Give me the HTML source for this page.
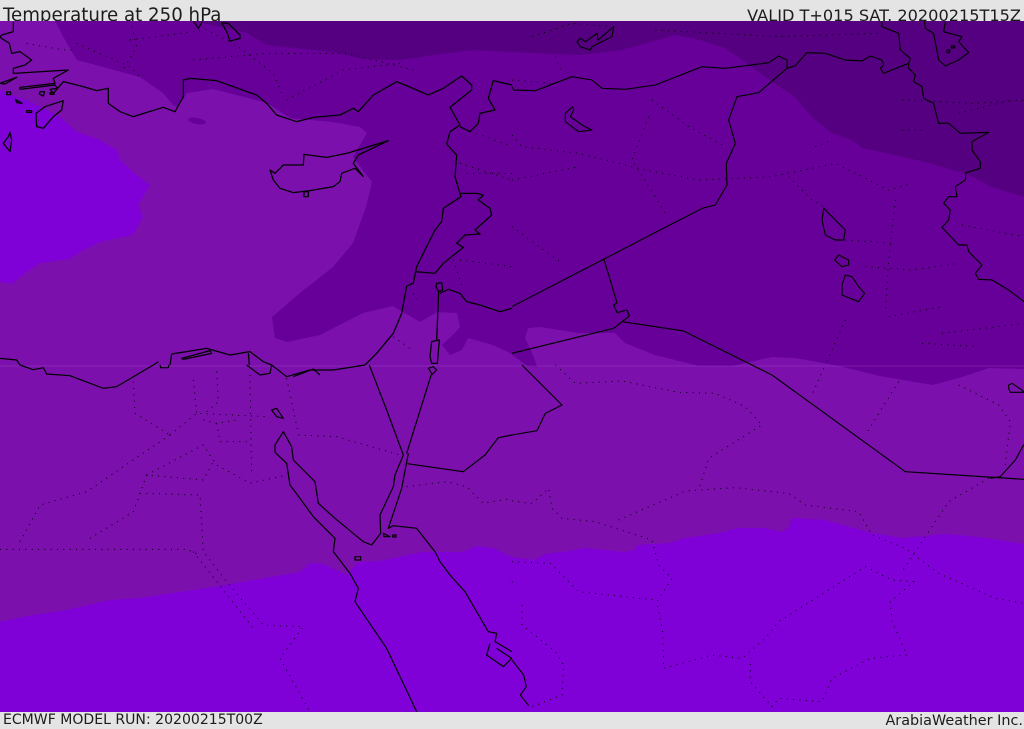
<!DOCTYPE html>
<html><head><meta charset="utf-8"><style>
html,body{margin:0;padding:0;background:#e4e4e4}
body{width:1024px;height:729px;overflow:hidden;position:relative;font-family:"DejaVu Sans","Liberation Sans",sans-serif;color:#1c1c1c}
.t{position:absolute;white-space:nowrap;line-height:1}
svg{position:absolute;left:0;top:21px}
</style></head><body>
<div class="t" style="left:3px;top:7px;font-size:18.2px">Temperature at 250 hPa</div>
<div class="t" style="right:3px;top:8px;font-size:16.15px">VALID T+015 SAT. 20200215T15Z</div>
<div class="t" style="left:3px;top:713px;font-size:14.05px">ECMWF MODEL RUN: 20200215T00Z</div>
<div class="t" style="right:1px;top:714px;font-size:14.4px">ArabiaWeather Inc.</div>
<svg width="1024" height="691" viewBox="0 21 1024 691">
<rect x="0" y="21" width="1024" height="691" fill="#7b10ac"/>
<path fill="#8000d8" d="M0 90L33 103 60 117 77 132 100 140 117 150 120 160 133 172 150 185 138 205 143 217 133 235 100 242 80 252 70 259 40 263 23 275 12 284 0 282Z"/>
<path fill="#8000d8" d="M0 622L27 616 67 610 110 600 140 598 213 587 300 572 310 563 323 564 347 575 358 562 380 561 423 552 463 552 477 546 493 548 512 557 534 560 545 554 562 552 585 548 625 552 634 550 637 545 669 543 685 538 719 533 739 528 765 528 782 532 789 527 792 518 825 520 872 533 902 538 945 534 979 537 1024 544V712H0Z"/>
<path fill="#660099" d="M55 21L65 40 77 60 103 67 140 77 163 93 173 105 178 107 187 93 213 89 267 103 290 118 333 122 360 127 367 133 353 157 372 182 366 207 353 243 333 267 300 293 272 317 275 338 287 342 320 335 363 313 393 306 420 322 437 312 457 313 460 327 455 333 442 345 450 355 462 350 468 338 493 345 510 353 527 366 537 367 533 355 525 338 528 328 540 327 579 333 615 333 625 343 655 355 699 366 732 366 772 357 795 358 839 366 880 376 932 385 959 378 989 368 1024 369V21Z"/>
<path fill="#550080" d="M193 21L247 33 267 45 333 52 363 59 400 60 433 55 473 50 512 52 579 55 622 50 675 35 692 38 725 48 745 62 769 80 795 97 812 117 832 133 852 140 862 148 895 155 929 163 969 175 992 187 1024 197V21Z"/>
<ellipse cx="197" cy="121" rx="9" ry="3" fill="#660099" transform="rotate(10 197 121)"/>
<rect x="0" y="365.5" width="1024" height="1" fill="#fff" opacity=".1"/>

<g fill="none" stroke="#000">
<g transform="scale(.33333)" stroke-width="3.8" stroke-linejoin="round">
<path d="M40 65L40 95 5 105 0 112 28 130 35 160 60 155 95 180 75 195 40 205 40 220 205 210 160 235 165 250 60 262 60 268 165 255 172 265 150 268 160 280 190 245 250 260 290 272 325 265 325 310 360 335 400 350 490 322 525 335 550 290 550 240 570 235 650 242 770 285 800 310 830 345 890 365 940 352 1020 345 1060 325 1075 335 1120 285 1190 245 1215 255 1285 285 1330 265 1385 228 1415 255 1415 270 1350 322 1380 375 1350 395 1340 432 1370 465 1365 530 1383 590 1330 625 1325 665 1305 690 1250 800 1240 850 1220 858 1205 940 1180 1000 1130 1060 1095 1095"/>
<path d="M0 250L50 232 15 252ZM190 302L185 330 160 350 130 385 110 380 108 340 135 320ZM30 397L35 420 30 455 10 430 25 410ZM20 276H32V284H20ZM46 298L66 310 50 308ZM80 332H95V337H80ZM120 275L134 275 130 288 118 282ZM150 278H162V283H150Z"/>
<path d="M912 463L910 495 850 495 825 520 810 510 820 540 840 565 880 578 930 572 1000 560 1020 545 1025 520 1065 505 1090 530 1060 490 1075 465 1165 422 1040 460 980 472 912 463ZM912 575L925 575 925 590 912 590Z"/>
<path d="M1310 850L1325 848 1328 870 1316 875 1308 860ZM1316 875L1310 1020M1290 1070L1295 1025 1318 1020 1312 1090 1295 1090ZM1320 880L1345 868 1380 880 1400 905 1440 915 1500 935 1536 925M1380 580H1430L1450 585 1435 600 1470 625 1475 645 1425 690 1440 702 1395 705 1370 730 1390 742 1330 790 1305 820 1245 815"/>
<path d="M1480 242L1536 255M1480 242L1465 295 1485 330 1440 340 1435 370 1410 395 1380 380"/>
<path d="M580 63L595 85 607 65M665 68L685 70 720 105 720 115 690 123 680 95 665 68"/>
<path d="M0 1075L50 1080 60 1095M460 1095L475 1085M510 1095L515 1062 620 1045 690 1065 750 1055 790 1085 815 1095M545 1075L630 1052 635 1060 550 1078ZM745 1060L748 1095"/>
</g>
<g transform="translate(512 0) scale(.33333)" stroke-width="3.4" stroke-linejoin="round">
<path d="M0 920L570 625 610 615 645 555 643 490 670 430 650 360 675 290 740 278 825 205"/>
<path d="M275 775L315 908 305 915 315 938 345 930 352 948 305 985 0 1060M330 965L515 993 720 1095"/>
<path d="M0 260L5 270 70 272 180 230 240 240 270 265 340 268 430 255 570 200 640 205 770 188 800 168 825 180 825 205 850 197 885 158 940 160 1000 180 1050 183 1075 168 1110 180 1115 195 1105 205 1115 220 1190 190 1190 205 1210 225 1205 245 1230 260 1235 295 1265 310 1280 370 1310 370 1345 400 1430 397 1380 425 1380 450 1405 485 1405 505 1362 518 1360 540 1330 560 1335 590 1310 590 1295 610 1315 630 1310 660 1290 682 1340 735 1365 735 1370 755 1410 795 1390 820 1400 838 1440 840 1490 870 1536 905"/>
<path d="M1110 63L1110 80 1160 100 1165 150 1195 175 1190 190M1237 63L1240 85 1265 100 1280 180 1300 198 1340 180 1370 158 1340 125 1350 110 1295 95 1300 65"/>
<path d="M195 125L205 115 220 125 255 100 258 120 305 80 300 110 240 140 235 150 205 140ZM182 320L160 340 160 365 200 395 240 390 215 378 175 350 185 330ZM935 625L930 660 940 705 970 720 995 720 1000 690 960 650ZM980 765L968 780 990 800 1010 795 1010 780ZM1000 825L990 855 990 885 1040 905 1058 880 1040 860 1020 830ZM1305 150h8v8h-8zM1318 138h10v6h-10z"/>
</g>
<g transform="translate(0 365) scale(.33333)" stroke-width="3.6" stroke-linejoin="round">
<path d="M60 0L100 14 130 8 140 27 210 32 310 70 350 65 460 0M480 0L482 8 505 8 507 0M740 0L780 30 810 25 815 0 860 35 930 15 1000 15 1095 0M880 35L940 12 960 30"/>
<path d="M1108 0L1160 135 1210 270M1220 265L1295 25 1285 10 1300 5 1310 15 1295 30"/>
<path d="M1225 265L1205 370 1165 490 1180 482 1250 490 1305 560 1320 590 1350 630 1395 680 1465 800 1490 805 1485 830 1536 860"/>
<path d="M1210 270L1185 330 1180 365 1140 450 1142 505 1115 540 1090 530 1005 460 955 415 945 350 880 285 875 245 850 200 825 240 825 262 860 295 870 360 900 400 940 455 1005 520 1000 560 1050 625 1075 670 1065 710 1160 850 1250 1040"/>
<path d="M815 135L830 130 850 160 830 155ZM1065 575H1082V585H1065ZM1150 505L1170 515 1152 515ZM1178 510h10v6h-10zM1470 835L1460 870 1510 905 1535 880 1490 850"/>
<path d="M1536 210L1495 218 1455 270 1390 320 1222 296"/>
</g>
<g transform="translate(512 365) scale(.33333)" stroke-width="3.4" stroke-linejoin="round">
<path d="M30 0L150 120 100 145 75 197 0 210M720 0L780 30 1180 320 1536 343M1435 340L1465 335 1510 285 1536 238M0 885L35 930 43 965 25 990 50 1022M1490 60L1500 55 1530 75 1536 82 1495 82 1490 70Z"/>
</g>
<g stroke-width="3" stroke-dasharray="3 16" stroke-linecap="butt">
<g transform="scale(.33333)">
<path d="M80 130L190 150 225 150M230 130L390 200 420 230M395 80L410 140 370 210M390 120L620 90 700 130 820 220 850 290M580 180L800 160 1040 160 1240 210M860 300L1030 210 1200 190M1430 400L1536 440M1380 490L1536 540M1400 520L1536 520M1380 780L1536 800M1360 780L1390 870M1240 880L1260 910M1180 1010L1230 1045"/>
</g>
<g transform="translate(512 0) scale(.33333)">
<path d="M60 110L180 70 300 80M430 90L620 100 800 110 1100 100M130 170L150 220M0 240L120 250M0 405L30 440 200 460 400 510 560 540 780 530 970 490 1130 570 1200 550M420 300L530 380 640 440M410 350L360 480 460 640M0 540L200 500M0 680L150 790M830 530L900 600 970 640M910 440L960 420M1170 300L1380 310 1536 300M1340 340L1500 300M1170 390H1230M1000 720L1150 730M1350 675L1536 710M1060 800L1200 810 1340 790M1130 950L1290 920M1290 1000L1536 970M1230 1030L1400 1040M1000 960L940 1095M1150 600L1130 780 1120 940"/>
</g>
<g transform="translate(0 365) scale(.33333)">
<path d="M0 553H560L600 570M400 50L405 145 510 210M510 210L590 145 800 155M580 45L590 145M650 20L655 110 620 140M750 30L755 330M860 40L895 205M895 210L1010 215 1200 270M610 165L650 175 710 165M650 175L660 230H750M270 520L400 440 440 330 610 345 640 290M440 330L610 240 650 300 750 355 860 330M60 530L120 420 260 380 510 210M420 385L600 390 610 560 680 650 790 780 910 785 840 880 930 1040M580 560L760 790M1220 365L1340 350 1400 365 1450 415 1536 400"/>
</g>
<g transform="translate(512 365) scale(.33333)">
<path d="M130 0L190 55 330 48 500 82 610 85 700 125 750 180 590 280 560 375M0 408L60 415 110 370 120 430 150 460 250 470 420 525 440 600 480 640 435 710 452 800 455 910 600 870 690 880 760 820 800 770 1060 605 1140 645 1205 650 1135 710 1140 770 1185 870 1075 880 960 940 930 1010 800 1000 780 1025 715 950 715 880M320 465L520 378 670 368 830 385 880 420 1040 440 1080 510 1180 550 1280 625 1450 700 1536 715M935 10L900 90M1160 50L1060 210M1340 60L1460 120 1495 170 1480 300M1430 340L1310 410 1170 620M0 590L115 595 200 680 430 705M30 720L30 780 130 860 155 900 150 990 60 1025M0 650L5 660"/>
</g>
</g>
</g>
</svg>
</body></html>
